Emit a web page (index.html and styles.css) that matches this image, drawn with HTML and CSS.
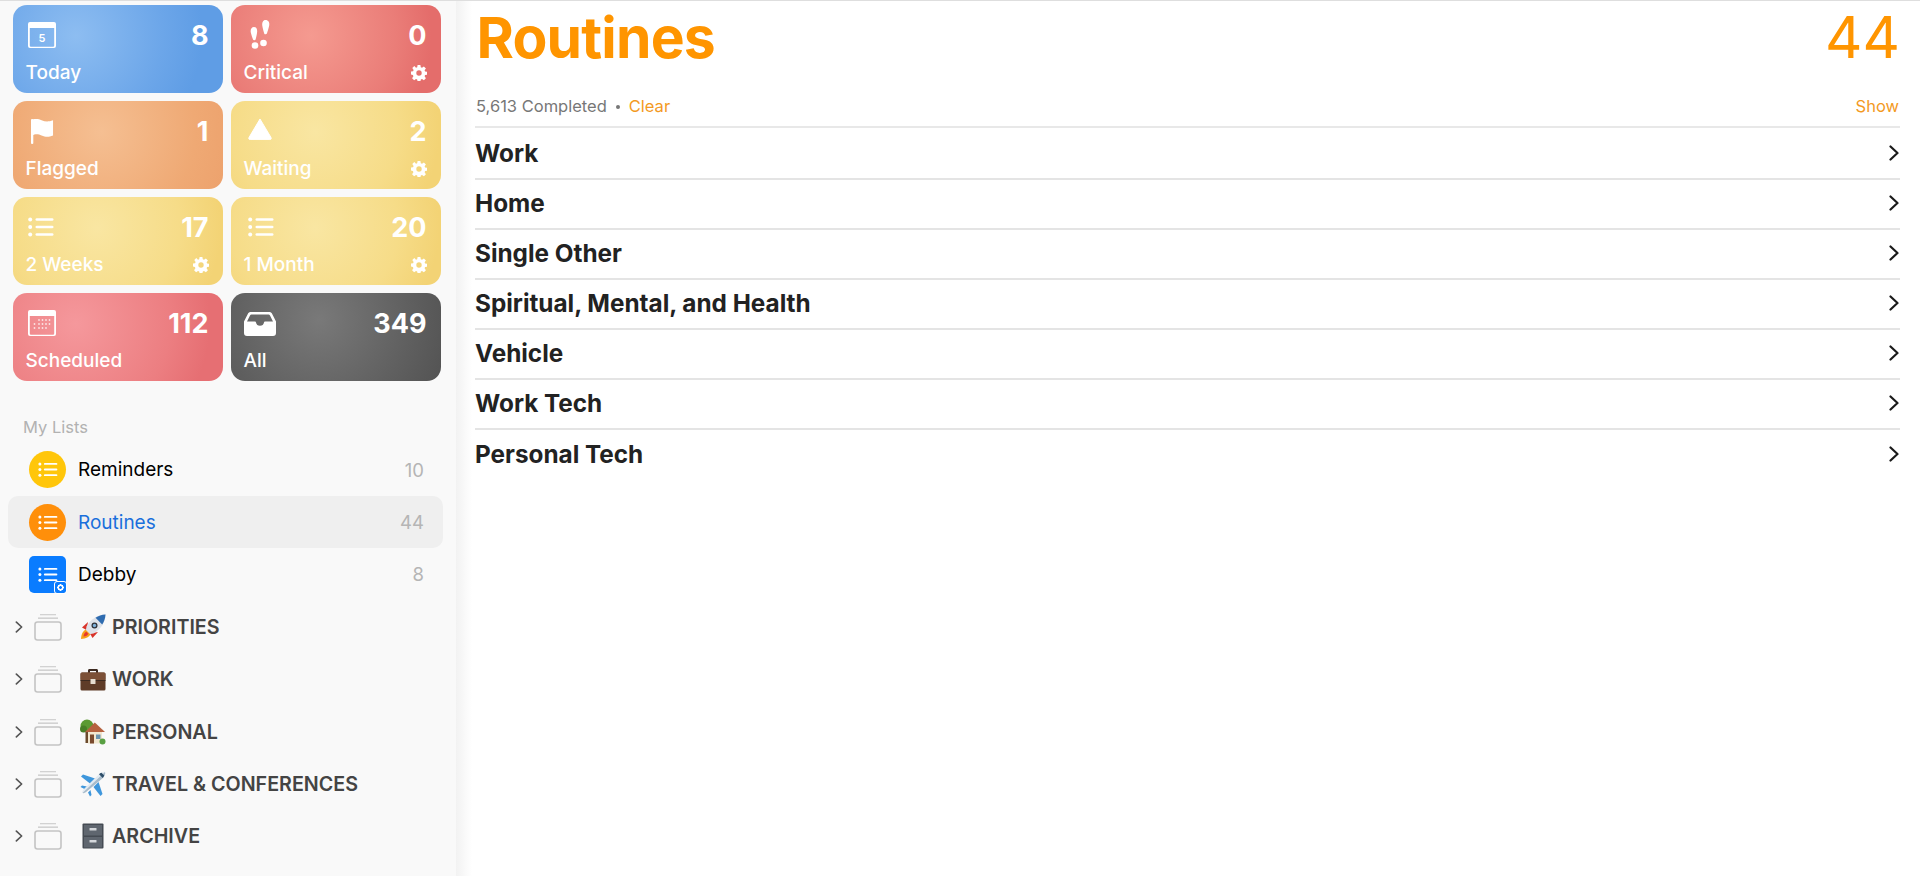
FILE: index.html
```html
<!DOCTYPE html>
<html lang="en">
<head>
    <meta charset="UTF-8">
    <meta name="viewport" content="width=device-width, initial-scale=1.0">
    <title>Routines</title>
    <link rel="stylesheet" href="styles.css">
</head>
<body>
    <svg class="sprite" aria-hidden="true">
        <symbol id="list" viewBox="0 0 26 20">
            <circle cx="2.2" cy="2.5" r="2"/><circle cx="2.2" cy="10" r="2"/><circle cx="2.2" cy="17.5" r="2"/>
            <rect x="7.5" y="1.2" width="18" height="2.6" rx="1.3"/><rect x="7.5" y="8.7" width="18" height="2.6" rx="1.3"/><rect x="7.5" y="16.2" width="18" height="2.6" rx="1.3"/>
        </symbol>
        <symbol id="gear" viewBox="0 0 16 16">
            <path fill-rule="evenodd" d="M6.6 0h2.8l.4 2.2 1.2.5L12.9 1.4l2 2-1.3 1.9.5 1.2 2.2.4v2.8l-2.2.4-.5 1.2 1.3 1.9-2 2-1.9-1.3-1.2.5-.4 2.2H6.6l-.4-2.2-1.2-.5-1.9 1.3-2-2 1.3-1.9-.5-1.2L-.1 9.400V6.600l2.2-.4.5-1.2L1.300 3.100l2-2L5 2.700l1.200-.5zM8 5.300a2.700 2.700 0 1 0 0 5.400 2.700 2.700 0 0 0 0-5.400z"/>
        </symbol>
        <symbol id="folder" viewBox="0 0 28 28">
            <rect x="1" y="9" width="26" height="18" rx="2.500" fill="none" stroke="#c4c4c4" stroke-width="1.600"/>
            <rect x="4" y="4.500" width="20" height="1.300" fill="#c9c9c9"/>
            <rect x="6" y="1" width="16" height="1.300" fill="#d2d2d2"/>
        </symbol>
        <symbol id="chevron" viewBox="0 0 10 16">
            <path d="M1.500 1.500 8.500 8l-7 6.500" fill="none" stroke="currentColor" stroke-width="2.200" stroke-linecap="round" stroke-linejoin="round"/>
        </symbol>
    </svg>

    <aside class="sidebar">
        <div class="tiles">
            <div class="tile blue">
                <div class="tile-top">
                    <svg class="tile-icon" width="28" height="26" viewBox="0 0 28 26">
                        <path fill-rule="evenodd" fill="#fff" d="M2 0h24a2 2 0 0 1 2 2v22a2 2 0 0 1-2 2H2a2 2 0 0 1-2-2V2a2 2 0 0 1 2-2zm-.2 6V23.500A1.200 1.200 0 0 0 3 24.700h22a1.200 1.200 0 0 0 1.200-1.200V6z"/>
                        <text class="cal-day" x="14" y="20">5</text>
                    </svg>
                    <span class="tile-count">8</span>
                </div>
                <div class="tile-bottom"><span>Today</span></div>
            </div>
            <div class="tile red">
                <div class="tile-top">
                    <svg class="tile-icon critical" width="22" height="29" viewBox="0 0 22 29" fill="#fff">
                        <path d="M5 7c2.600 0 3.600 2.400 3 6-.4 2.600-1 5-1.400 6.500-.3 1-2.300 1-2.600 0C3.400 17.500 2.300 15 1.800 12.500 1.200 9.500 2.400 7 5 7z"/>
                        <circle cx="6" cy="25.500" r="3.300"/>
                        <path d="M16.500 0c2.800 0 4.300 2.400 3.700 5.500-.5 2.700-1.600 6-2.300 8-.4 1-2.400 1-2.700-.1-.6-2.200-1.500-5-1.900-7.700C12.900 2.600 14 0 16.500 0z"/>
                        <circle cx="14.500" cy="23" r="3.300"/>
                    </svg>
                    <span class="tile-count">0</span>
                </div>
                <div class="tile-bottom"><span>Critical</span><svg class="gear"><use href="#gear"/></svg></div>
            </div>
            <div class="tile orange">
                <div class="tile-top">
                    <svg class="tile-icon flag" width="23" height="25" viewBox="0 0 24 26" fill="#fff">
                        <rect x="0" y="0" width="2.400" height="26" rx="1"/>
                        <path d="M1 1c4-2.200 7-1 10 .2 4 1.500 7 1.800 12 0v16c-5 2-8 1.500-12 0-3-1.200-6-2.200-10 .2z"/>
                    </svg>
                    <span class="tile-count">1</span>
                </div>
                <div class="tile-bottom"><span>Flagged</span></div>
            </div>
            <div class="tile yellow">
                <div class="tile-top">
                    <svg class="tile-icon wedge" width="24" height="22" viewBox="0 0 24 22" fill="#fff">
                        <path d="M12 1 23 19.500a1.500 1.500 0 0 1-1.300 2.300H2.300A1.500 1.500 0 0 1 1 19.500z" stroke="#fff" stroke-width="1" stroke-linejoin="round"/>
                    </svg>
                    <span class="tile-count">2</span>
                </div>
                <div class="tile-bottom"><span>Waiting</span><svg class="gear"><use href="#gear"/></svg></div>
            </div>
            <div class="tile yellow">
                <div class="tile-top">
                    <svg class="tile-icon list-icon"><use href="#list"/></svg>
                    <span class="tile-count">17</span>
                </div>
                <div class="tile-bottom"><span>2 Weeks</span><svg class="gear"><use href="#gear"/></svg></div>
            </div>
            <div class="tile yellow">
                <div class="tile-top">
                    <svg class="tile-icon list-icon right-list"><use href="#list"/></svg>
                    <span class="tile-count">20</span>
                </div>
                <div class="tile-bottom"><span>1 Month</span><svg class="gear"><use href="#gear"/></svg></div>
            </div>
            <div class="tile pink">
                <div class="tile-top">
                    <svg class="tile-icon" width="28" height="26" viewBox="0 0 28 26">
                        <path fill-rule="evenodd" fill="#fff" d="M2 0h24a2 2 0 0 1 2 2v22a2 2 0 0 1-2 2H2a2 2 0 0 1-2-2V2a2 2 0 0 1 2-2zm-.2 6v17.500A1.200 1.200 0 0 0 3 24.700h22a1.200 1.200 0 0 0 1.200-1.200V6z"/>
                        <g fill="#fff" opacity=".75">
                            <circle cx="11" cy="10" r=".9"/><circle cx="14.500" cy="10" r=".9"/><circle cx="18" cy="10" r=".9"/><circle cx="21.500" cy="10" r=".9"/>
                            <circle cx="6.500" cy="14" r=".9"/><circle cx="11" cy="14" r=".9"/><circle cx="14.500" cy="14" r=".9"/><circle cx="18" cy="14" r=".9"/><circle cx="21.500" cy="14" r=".9"/>
                            <circle cx="6.500" cy="18" r=".9"/><circle cx="11" cy="18" r=".9"/><circle cx="14.500" cy="18" r=".9"/><circle cx="18" cy="18" r=".9"/>
                        </g>
                    </svg>
                    <span class="tile-count">112</span>
                </div>
                <div class="tile-bottom"><span>Scheduled</span></div>
            </div>
            <div class="tile gray">
                <div class="tile-top">
                    <svg class="tile-icon tray" width="32" height="24" viewBox="0 0 32 24" fill="#fff">
                        <path fill-rule="evenodd" d="M7 0h18c1.500 0 2.500.6 3.200 1.900L32 9.500V21a3 3 0 0 1-3 3H3a3 3 0 0 1-3-3V9.500L3.800 1.900C4.500.6 5.500 0 7 0zm.5 2.500c-.7 0-1.200.3-1.500 1L3 9.500h8c.6 0 .9.400 1 1 .3 2 1.800 3.300 4 3.300s3.700-1.300 4-3.300c.1-.6.400-1 1-1h8l-3-6c-.3-.7-.8-1-1.500-1z"/>
                    </svg>
                    <span class="tile-count">349</span>
                </div>
                <div class="tile-bottom"><span>All</span></div>
            </div>
        </div>

        <div class="section-title">My Lists</div>
        <ul class="lists">
            <li class="list-row">
                <span class="list-badge round gold"><svg><use href="#list"/></svg></span>
                <span class="list-name">Reminders</span>
                <span class="list-count">10</span>
            </li>
            <li class="list-row active">
                <span class="list-badge round amber"><svg><use href="#list"/></svg></span>
                <span class="list-name">Routines</span>
                <span class="list-count">44</span>
            </li>
            <li class="list-row">
                <span class="list-badge square azure">
                    <svg><use href="#list"/></svg>
                    <i class="shared"></i>
                </span>
                <span class="list-name">Debby</span>
                <span class="list-count">8</span>
            </li>
        </ul>

        <ul class="groups">
            <li class="group-row">
                <svg class="group-chevron"><use href="#chevron"/></svg>
                <svg class="group-folder"><use href="#folder"/></svg>
                <svg class="emoji" viewBox="0 0 26 26">
                    <path d="M1 25c.3-5 2-8.500 5-9.500l4.500 4.500C9.500 23 6 24.700 1 25z" fill="#f7a21b"/>
                    <path d="M3.500 22.500c.3-2.500 1.200-4.200 2.800-4.800l2 2c-.6 1.600-2.300 2.500-4.800 2.800z" fill="#e8382c"/>
                    <path d="M2 13.500 8 8l-1.500 8z" fill="#d8342b"/>
                    <path d="M12.500 24l5.500-6-8 1.500z" fill="#d8342b"/>
                    <path d="M25.500.5C17 1 11 5 6.500 12.500l-.5 3.500 4 4 3.500-.5C21 15 25 9 25.500.5z" fill="#dde2ea"/>
                    <path d="M25.500.5c-3.800.2-7 1.300-10 3.300l6.700 6.700c2-3 3.100-6.200 3.300-10z" fill="#2f6cb0"/>
                    <circle cx="14.500" cy="11.500" r="3" fill="#2f3138"/>
                    <circle cx="14.500" cy="11.500" r="1.700" fill="#7fb2dc"/>
                </svg>
                <span class="group-name">PRIORITIES</span>
            </li>
            <li class="group-row">
                <svg class="group-chevron"><use href="#chevron"/></svg>
                <svg class="group-folder"><use href="#folder"/></svg>
                <svg class="emoji" viewBox="0 0 26 26">
                    <path d="M8 7V4.500C8 3.500 8.700 3 9.500 3h7c.8 0 1.500.5 1.500 1.500V7h-2V5h-6v2z" fill="#3d2a20"/>
                    <rect x="0.500" y="6.500" width="25" height="18" rx="1.500" fill="#5f3c28"/>
                    <rect x="0.500" y="6.500" width="25" height="8" rx="1.500" fill="#7c5036"/>
                    <rect x="0.500" y="14" width="25" height="1" fill="#3d2a20"/>
                    <rect x="10.500" y="13" width="5" height="5" rx=".6" fill="#e6ddd0"/>
                </svg>
                <span class="group-name">WORK</span>
            </li>
            <li class="group-row">
                <svg class="group-chevron"><use href="#chevron"/></svg>
                <svg class="group-folder"><use href="#folder"/></svg>
                <svg class="emoji" viewBox="0 0 26 26">
                    <circle cx="7" cy="7" r="6.500" fill="#5c9a33"/>
                    <circle cx="3.500" cy="10" r="3.500" fill="#487f27"/>
                    <rect x="5.500" y="12" width="2.500" height="12" fill="#6b4a2c"/>
                    <rect x="8" y="11" width="14" height="13.500" fill="#f1e6cf"/>
                    <path d="M5 13 14.800 3.500 25 13z" fill="#b5623f"/>
                    <rect x="10" y="15.500" width="4" height="9" fill="#7a4a2e"/>
                    <rect x="16" y="15.500" width="4.500" height="4.500" fill="#6b93ad"/>
                    <circle cx="22.500" cy="22.500" r="3" fill="#59a043"/>
                </svg>
                <span class="group-name">PERSONAL</span>
            </li>
            <li class="group-row">
                <svg class="group-chevron"><use href="#chevron"/></svg>
                <svg class="group-folder"><use href="#folder"/></svg>
                <svg class="emoji" viewBox="0 0 26 26">
                    <path d="M1 5.500 3 3.500l12 4-5 5z" fill="#3f97dc"/>
                    <path d="M20.500 25l2-2-4-12-5 5z" fill="#3f97dc"/>
                    <path d="M.5 16l1.500-1.500 5 1L4.500 18z" fill="#3f97dc"/>
                    <path d="M10 25.500l1.500-1.500-1-5L8 21.500z" fill="#3f97dc"/>
                    <path d="M25 1c-1.800-.7-4.200.4-6 2.200L3.500 18.500c-1 1-1.300 2.500-1 3.500.9.400 2.500 0 3.500-1L22.800 7c1.800-1.800 2.900-4.200 2.200-6z" fill="#e3ebf2"/>
                    <path d="M25 1c.7 1.800-.4 4.200-2.200 6L6 21c-1 1-2.600 1.400-3.500 1z" fill="#a9bccb"/>
                    <path d="M21.500 1.800c-1 .3-1.800.8-2.500 1.400L22.800 7c.6-.7 1.100-1.500 1.400-2.500z" fill="#2d4d68"/>
                </svg>
                <span class="group-name">TRAVEL &amp; CONFERENCES</span>
            </li>
            <li class="group-row">
                <svg class="group-chevron"><use href="#chevron"/></svg>
                <svg class="group-folder"><use href="#folder"/></svg>
                <svg class="emoji" viewBox="0 0 26 26">
                    <rect x="2.500" y="0.500" width="21" height="25" rx="1" fill="#454b53"/>
                    <rect x="4" y="2" width="18" height="10.500" fill="#5f666f"/>
                    <rect x="4" y="14" width="18" height="10.500" fill="#5f666f"/>
                    <rect x="9.500" y="5" width="7" height="2.500" rx=".5" fill="#d5d8dc"/>
                    <rect x="9.500" y="17" width="7" height="2.500" rx=".5" fill="#d5d8dc"/>
                </svg>
                <span class="group-name">ARCHIVE</span>
            </li>
            <li class="group-row">
                <svg class="group-folder no-chevron"><use href="#folder"/></svg>
            </li>
        </ul>
    </aside>

    <main class="content">
        <header class="title-row">
            <h1>Routines</h1>
            <span class="total">44</span>
        </header>
        <div class="completed-row">
            <div class="completed-left">
                <span class="completed">5,613 Completed</span>
                <span class="dot"></span>
                <span class="link">Clear</span>
            </div>
            <span class="link">Show</span>
        </div>
        <ul class="sections">
            <li><span>Work</span><svg class="section-chevron"><use href="#chevron"/></svg></li>
            <li><span>Home</span><svg class="section-chevron"><use href="#chevron"/></svg></li>
            <li><span>Single Other</span><svg class="section-chevron"><use href="#chevron"/></svg></li>
            <li><span>Spiritual, Mental, and Health</span><svg class="section-chevron"><use href="#chevron"/></svg></li>
            <li><span>Vehicle</span><svg class="section-chevron"><use href="#chevron"/></svg></li>
            <li><span>Work Tech</span><svg class="section-chevron"><use href="#chevron"/></svg></li>
            <li><span>Personal Tech</span><svg class="section-chevron"><use href="#chevron"/></svg></li>
        </ul>
    </main>
</body>
</html>
```

FILE: styles.css
```css
*{
    box-sizing: border-box;
}
body{
    margin: 0;
    height: 100vh;
    overflow: hidden;
    display: flex;
    background-color: #fff;
    border-top: 1px solid #dedede;
    font-family: Inter, "Liberation Sans", sans-serif;
}
ul{
    list-style: none;
    margin: 0;
    padding: 0;
}
.sprite{
    display: none;
}

/* sidebar */
.sidebar{
    width: 456px;
    flex-shrink: 0;
    height: 100%;
    overflow: hidden;
    padding: 4px 0 0 0;
    background-color: #f9f9f9;
}
.tiles{
    display: grid;
    grid-template-columns: 209.5px 209.5px;
    grid-auto-rows: 88px;
    column-gap: 8.5px;
    row-gap: 8px;
    margin-left: 13px;
}
.tile{
    border-radius: 14px;
    padding: 15px 14px 8px 12.5px;
    color: #fff;
    display: flex;
    flex-direction: column;
    justify-content: space-between;
}
.blue{
    background: radial-gradient(circle at 30% 35%, #8dbdf1, #6ca6e9 55%, #5f9de5 80%);
}
.red{
    background: radial-gradient(circle at 38% 35%, #f59a90, #ea7d78 60%, #e46d6b 85%);
}
.orange{
    background: radial-gradient(circle at 42% 35%, #f5bf92, #efa974 70%, #eda26d);
}
.yellow{
    background: radial-gradient(circle at 40% 35%, #f9e6a2, #f6dc88 60%, #f3d375 90%);
}
.pink{
    background: radial-gradient(circle at 30% 35%, #f5989c, #ec7e81 60%, #e66f73 85%);
}
.gray{
    background: radial-gradient(circle at 42% 30%, #797979, #606060 65%, #535353);
}
.tile-top{
    display: flex;
    justify-content: space-between;
    align-items: flex-start;
}
.tile-bottom{
    display: flex;
    justify-content: space-between;
    align-items: center;
    font-size: 19px;
    font-weight: 500;
    line-height: 24px;
}
.tile-count{
    font-size: 27px;
    font-weight: 700;
    line-height: 30px;
    margin-top: 1px;
}
.tile-icon{
    margin: 2px 0 0 2.5px;
    display: block;
}
.critical{
    margin: 0 0 0 5px;
}
.flag{
    margin: 3px 0 0 5px;
}
.wedge{
    margin-left: 4px;
}
.tray{
    margin: 4px 0 0 0;
}
.list-icon{
    width: 26px;
    height: 20px;
    fill: #fff;
    margin-top: 5px;
}
.right-list{
    margin-left: 4px;
}
.cal-day{
    font-size: 11px;
    font-weight: 600;
    fill: #fff;
    text-anchor: middle;
}
.gear{
    width: 16px;
    height: 16px;
    fill: #fff;
}

.section-title{
    margin: 34px 0 0 23px;
    font-size: 16.5px;
    line-height: 24px;
    color: #b2b2b2;
}
.lists{
    margin-top: 4.5px;
}
.list-row{
    height: 52.4px;
    margin: 0 13px 0 8px;
    padding: 0 19px 0 21px;
    display: flex;
    align-items: center;
    border-radius: 10px;
}
.list-row.active{
    background-color: #efefef;
}
.list-row.active .list-name{
    color: #1a6fdc;
}
.list-badge{
    position: relative;
    width: 37px;
    height: 37px;
    flex-shrink: 0;
    display: flex;
    justify-content: center;
    align-items: center;
}
.list-badge svg{
    width: 20px;
    height: 15px;
    fill: #fff;
}
.round{
    border-radius: 50%;
}
.square{
    border-radius: 5px;
}
.gold{
    background-color: #ffc60a;
}
.amber{
    background-color: #ff8f0a;
}
.azure{
    background-color: #0a7cff;
}
.shared{
    position: absolute;
    right: 0;
    bottom: 0;
    width: 11px;
    height: 11px;
    outline: 1px solid #fff;
    border-radius: 2px;
    background: radial-gradient(circle, #0a7cff 0 1.3px, #fff 1.5px 3px, #0a7cff 3.3px);
}
.list-name{
    margin-left: 12px;
    flex: 1;
    font-size: 19px;
    color: #000;
}
.list-count{
    font-size: 18.5px;
    color: #b5b5b5;
}
.group-row{
    height: 52.4px;
    display: flex;
    align-items: center;
    padding-left: 15px;
}
.group-chevron{
    width: 8px;
    height: 12px;
    color: #555;
    flex-shrink: 0;
}
.group-folder{
    width: 28px;
    height: 28px;
    margin-left: 11px;
    flex-shrink: 0;
}
.no-chevron{
    margin-left: 19px;
}
.emoji{
    width: 26px;
    height: 26px;
    margin-left: 18px;
    flex-shrink: 0;
}
.group-name{
    margin-left: 6px;
    font-size: 19.7px;
    font-weight: 600;
    color: #444;
}

/* main */
.content{
    flex: 1;
    padding: 0 20px 0 19px;
    background: linear-gradient(to right, #f2f2f2, #fff 16px);
}
.title-row{
    display: flex;
    justify-content: space-between;
    align-items: flex-start;
    height: 84px;
}
.title-row h1{
    margin: 2px 0 0 1.5px;
    font-size: 57px;
    font-weight: 700;
    letter-spacing: -0.8px;
    line-height: 70px;
    color: #ff9500;
}
.total{
    margin-top: 1px;
    font-size: 58px;
    font-weight: 400;
    line-height: 70px;
    color: #ff9500;
}
.completed-row{
    display: flex;
    justify-content: space-between;
    align-items: center;
    height: 43px;
    padding: 0 1px;
    font-size: 16.5px;
    border-bottom: 2px solid #e8e8e8;
}
.completed-left{
    display: flex;
    align-items: center;
}
.completed{
    color: #777;
}
.dot{
    width: 4px;
    height: 4px;
    margin: 2px 9px 0 9px;
    border-radius: 50%;
    background-color: #777;
}
.link{
    color: #f39a1f;
}
.sections{
    margin-top: 2px;
}
.sections li{
    height: 50px;
    display: flex;
    justify-content: space-between;
    align-items: center;
    padding: 0 1px 2px 0;
    font-size: 24.3px;
    font-weight: 700;
    color: #222;
    border-bottom: 2px solid #e4e4e4;
}
.sections li:last-child{
    border-bottom: none;
}
.section-chevron{
    width: 10px;
    height: 16px;
    color: #1a1a1a;
}
```
